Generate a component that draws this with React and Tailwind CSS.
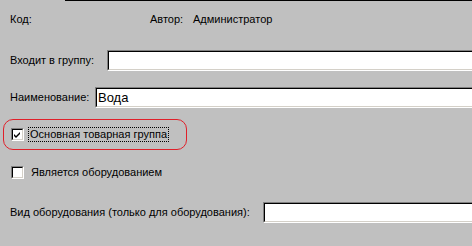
import React from 'react';

const Sunken = ({ className = '', children }) => (
  <div className={`border border-t-[#808080] border-l-[#808080] border-b-white border-r-white ${className}`}>
    <div className="h-full border border-t-black border-l-black border-b-[#d4d0c8] border-r-[#d4d0c8] bg-white flex items-center">
      {children}
    </div>
  </div>
);

const CheckBox = ({ checked }) => (
  <Sunken className="w-[13px] h-[13px] shrink-0">
    {checked && (
      <svg width="9" height="9" viewBox="0 0 9 9" className="block">
        <path d="M1 4 L3 6 L7 2 L7 4 L3 8 L1 6 Z" fill="#000" />
      </svg>
    )}
  </Sunken>
);

export default function App() {
  return (
    <div
      className="w-[472px] h-[246px] overflow-hidden bg-[#c0c0c0] text-black text-[11px] flex flex-col"
      style={{ fontFamily: '"Liberation Sans", Arial, sans-serif' }}
    >
      <div className="h-px ml-[65px] bg-black" />

      <div className="h-[36px] flex items-center pl-[10px]">
        <span className="w-[140px]">Код:</span>
        <span className="w-[43px]">Автор:</span>
        <span>Администратор</span>
      </div>

      <div className="mt-[13px] h-[21px] flex items-center pl-[10px]">
        <span className="w-[97px]">Входит в группу:</span>
        <Sunken className="flex-1 h-full -mr-1" />
      </div>

      <div className="mt-[16px] h-[21px] flex items-center pl-[10px]">
        <span className="w-[85px]">Наименование:</span>
        <Sunken className="flex-1 h-full -mr-1">
          <span className="pl-[1px] text-[13px]">Вода</span>
        </Sunken>
      </div>

      <div className="mt-[11px] ml-[3px] w-[184px] h-[31px] border border-[#e0202a] rounded-[10px] flex items-center pl-[7px]">
        <CheckBox checked />
        <span className="ml-[4px] h-[15px] px-[1px] border border-dotted border-black flex items-center">
          Основная товарная группа
        </span>
      </div>

      <div className="mt-[16px] h-[13px] flex items-center pl-[11px]">
        <CheckBox />
        <span className="ml-[7px]">Является оборудованием</span>
      </div>

      <div className="mt-[23px] h-[21px] flex items-center pl-[10px]">
        <span className="w-[253px]">Вид оборудования (только для оборудования):</span>
        <Sunken className="flex-1 h-full -mr-1" />
      </div>
    </div>
  );
}
